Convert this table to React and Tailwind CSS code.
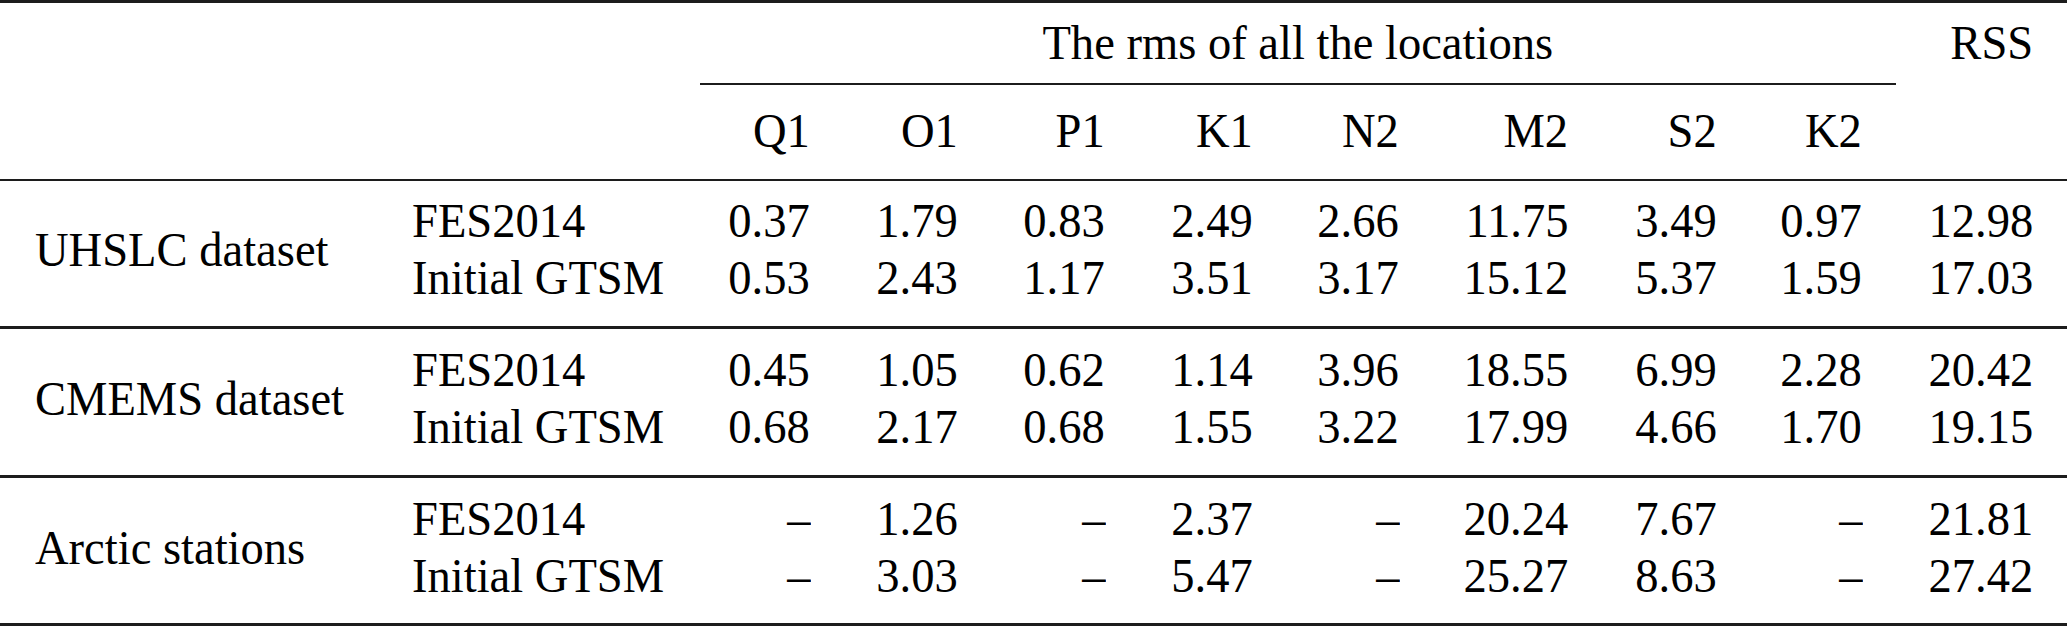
import React from "react";

const cols =
  "grid grid-cols-[378px_322px_144px_148px_147px_148px_146px_169px_149px_145px_171px]";

const heads = ["Q1", "O1", "P1", "K1", "N2", "M2", "S2", "K2"];

const groups = [
  {
    label: "UHSLC dataset",
    rows: [
      ["FES2014", "0.37", "1.79", "0.83", "2.49", "2.66", "11.75", "3.49", "0.97", "12.98"],
      ["Initial GTSM", "0.53", "2.43", "1.17", "3.51", "3.17", "15.12", "5.37", "1.59", "17.03"],
    ],
    box: "pt-[11px] pb-[20px] border-b-[3px]",
  },
  {
    label: "CMEMS dataset",
    rows: [
      ["FES2014", "0.45", "1.05", "0.62", "1.14", "3.96", "18.55", "6.99", "2.28", "20.42"],
      ["Initial GTSM", "0.68", "2.17", "0.68", "1.55", "3.22", "17.99", "4.66", "1.70", "19.15"],
    ],
    box: "pt-[12px] pb-[20px] border-b-[3px]",
  },
  {
    label: "Arctic stations",
    rows: [
      ["FES2014", "–", "1.26", "–", "2.37", "–", "20.24", "7.67", "–", "21.81"],
      ["Initial GTSM", "–", "3.03", "–", "5.47", "–", "25.27", "8.63", "–", "27.42"],
    ],
    box: "pt-[12px] pb-[19px] border-b-[3px]",
  },
];

// the typeset table is a little narrower than plain Times, so squeeze glyphs
const R = ({ children }) => (
  <span className="inline-block scale-x-[0.95] origin-right whitespace-nowrap">{children}</span>
);
const L = ({ children }) => (
  <span className="inline-block scale-x-[0.95] origin-left whitespace-nowrap">{children}</span>
);

const Group = ({ label, rows, box }) => (
  <div className={`${box} border-[#1c1c1c]`}>
    <div className={`${cols} grid-rows-[57px_57px]`}>
      <div className="row-span-2 flex items-center pl-[35px]">
        <L>{label}</L>
      </div>
      {rows.map((r, i) =>
        r.map((cell, j) =>
          j === 0 ? (
            <div key={`${i}-${j}`} className="pl-[34px]">
              <L>{cell}</L>
            </div>
          ) : (
            <div key={`${i}-${j}`} className="pr-[34px] text-right">
              <R>{cell}</R>
            </div>
          )
        )
      )}
    </div>
  </div>
);

export default function App() {
  return (
    <div className="w-[2067px] h-[626px] overflow-hidden bg-white text-black [font-family:Liberation_Serif,Times_New_Roman,serif] text-[49px] leading-[57px]">
      <div className="border-t-[3px] border-b-2 border-[#1c1c1c]">
        <div className={cols}>
          <div className="col-span-2" />
          <div className="col-span-8 pt-[11px] pb-[12px] border-b-2 border-[#1c1c1c] text-center">
            <span className="inline-block scale-x-[0.95] whitespace-nowrap">
              The rms of all the locations
            </span>
          </div>
          <div className="pt-[11px] pr-[34px] text-right">
            <R>RSS</R>
          </div>

          <div className="col-span-2" />
          {heads.map((h) => (
            <div key={h} className="pt-[17px] pb-[20px] pr-[34px] text-right">
              <R>{h}</R>
            </div>
          ))}
          <div />
        </div>
      </div>

      {groups.map((g) => (
        <Group key={g.label} {...g} />
      ))}
    </div>
  );
}
